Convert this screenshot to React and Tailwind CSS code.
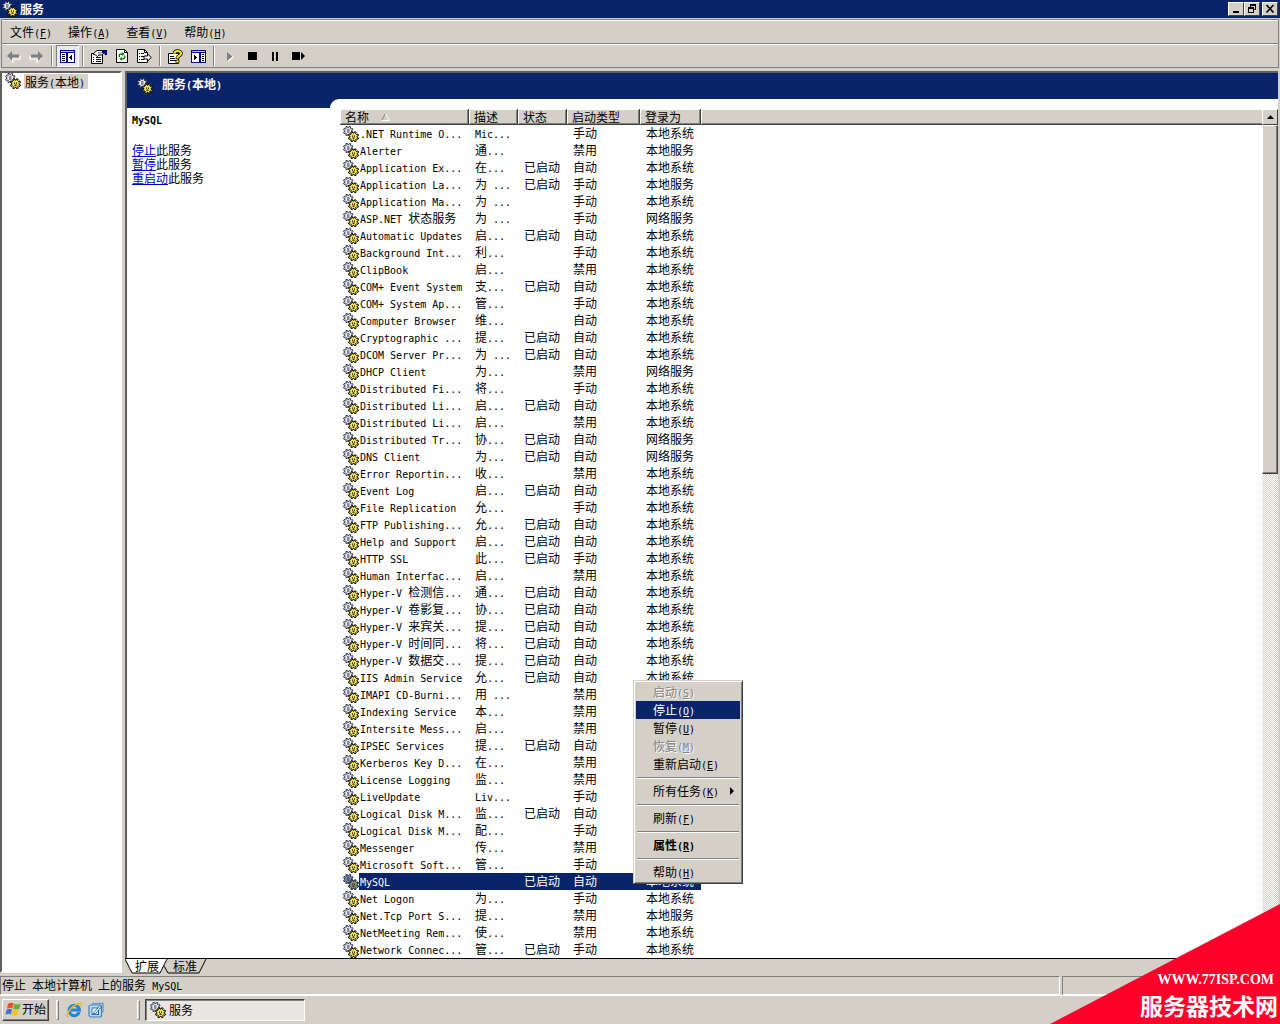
import React from "react";

const SYS = "本地系统";
const LOC = "本地服务";
const NET = "网络服务";

const services = [
  [".NET Runtime O...", "Mic...", 0, "手动", SYS],
  ["Alerter", "通...", 0, "禁用", LOC],
  ["Application Ex...", "在...", 1, "自动", SYS],
  ["Application La...", "为 ...", 1, "手动", LOC],
  ["Application Ma...", "为 ...", 0, "手动", SYS],
  ["ASP.NET 状态服务", "为 ...", 0, "手动", NET],
  ["Automatic Updates", "启...", 1, "自动", SYS],
  ["Background Int...", "利...", 0, "手动", SYS],
  ["ClipBook", "启...", 0, "禁用", SYS],
  ["COM+ Event System", "支...", 1, "自动", SYS],
  ["COM+ System Ap...", "管...", 0, "手动", SYS],
  ["Computer Browser", "维...", 0, "自动", SYS],
  ["Cryptographic ...", "提...", 1, "自动", SYS],
  ["DCOM Server Pr...", "为 ...", 1, "自动", SYS],
  ["DHCP Client", "为...", 0, "禁用", NET],
  ["Distributed Fi...", "将...", 0, "手动", SYS],
  ["Distributed Li...", "启...", 1, "自动", SYS],
  ["Distributed Li...", "启...", 0, "禁用", SYS],
  ["Distributed Tr...", "协...", 1, "自动", NET],
  ["DNS Client", "为...", 1, "自动", NET],
  ["Error Reportin...", "收...", 0, "禁用", SYS],
  ["Event Log", "启...", 1, "自动", SYS],
  ["File Replication", "允...", 0, "手动", SYS],
  ["FTP Publishing...", "允...", 1, "自动", SYS],
  ["Help and Support", "启...", 1, "自动", SYS],
  ["HTTP SSL", "此...", 1, "手动", SYS],
  ["Human Interfac...", "启...", 0, "禁用", SYS],
  ["Hyper-V 检测信...", "通...", 1, "自动", SYS],
  ["Hyper-V 卷影复...", "协...", 1, "自动", SYS],
  ["Hyper-V 来宾关...", "提...", 1, "自动", SYS],
  ["Hyper-V 时间同...", "将...", 1, "自动", SYS],
  ["Hyper-V 数据交...", "提...", 1, "自动", SYS],
  ["IIS Admin Service", "允...", 1, "自动", SYS],
  ["IMAPI CD-Burni...", "用 ...", 0, "禁用", SYS],
  ["Indexing Service", "本...", 0, "禁用", SYS],
  ["Intersite Mess...", "启...", 0, "禁用", SYS],
  ["IPSEC Services", "提...", 1, "自动", SYS],
  ["Kerberos Key D...", "在...", 0, "禁用", SYS],
  ["License Logging", "监...", 0, "禁用", SYS],
  ["LiveUpdate", "Liv...", 0, "手动", SYS],
  ["Logical Disk M...", "监...", 1, "自动", SYS],
  ["Logical Disk M...", "配...", 0, "手动", SYS],
  ["Messenger", "传...", 0, "禁用", SYS],
  ["Microsoft Soft...", "管...", 0, "手动", SYS],
  ["MySQL", "", 1, "自动", SYS],
  ["Net Logon", "为...", 0, "手动", SYS],
  ["Net.Tcp Port S...", "提...", 0, "禁用", LOC],
  ["NetMeeting Rem...", "使...", 0, "禁用", SYS],
  ["Network Connec...", "管...", 1, "手动", SYS],
];

/* Chinese at 12px with half-width Latin set at 10px monospace (6px advance). */
function T({ children }) {
  return (
    <>
      {children.split(/([\x20-\x7e]+)/).filter(Boolean).map((part, i) =>
        /^[\x20-\x7e]/.test(part) ? (
          <span key={i} className="text-[10px] leading-none font-['DejaVu_Sans_Mono',monospace] whitespace-pre">{part}</span>
        ) : (
          <span key={i}>{part}</span>
        )
      )}
    </>
  );
}

/* Label followed by its underlined access key, e.g. 文件(F) */
function Keyed({ label, k }) {
  return (
    <>
      {label}
      <span className="text-[10px] leading-none font-['DejaVu_Sans_Mono',monospace]">(<u>{k}</u>)</span>
    </>
  );
}

function gearPath(cx, cy, outer, inner, teeth) {
  const pts = [];
  const step = (Math.PI * 2) / teeth;
  for (let i = 0; i < teeth; i++) {
    const a = (i + 0.5) * step;
    [[-0.3, inner], [-0.2, outer], [0.2, outer], [0.3, inner]].forEach(([o, r]) => {
      pts.push((cx + Math.cos(a + o * step) * r).toFixed(2) + " " + (cy + Math.sin(a + o * step) * r).toFixed(2));
    });
  }
  return "M" + pts.join("L") + "Z";
}

const backGear = gearPath(5.3, 5, 4.9, 3.4, 8);
const frontGear = gearPath(10.5, 10.7, 5.2, 3.7, 8);

function Gears({ dim = false }) {
  const yellow = dim ? "#8f9150" : "#f4e650";
  const grey = dim ? "#7f8cb0" : "#eceef4";
  const ink = dim ? "#0a1a50" : "#000";
  return (
    <svg width="16" height="16" viewBox="0 0 16 16" className="shrink-0" aria-hidden="true">
      <path d={backGear} fill={grey} stroke="#20263c" strokeWidth="0.9" />
      <path d="M4 4h2.500M4 6h2.500" stroke="#20263c" strokeWidth="1" />
      <path d={frontGear} fill={yellow} stroke={ink} strokeWidth="1" />
      <path d="M9 10.200h1M11 10.200h1M9.500 12.200h2" stroke={ink} strokeWidth="1.200" />
    </svg>
  );
}

function Arrow({ flip = false }) {
  return (
    <svg width="15" height="14" viewBox="0 0 15 14" aria-hidden="true" className={flip ? "-scale-x-100" : ""}>
      <path d="M2 8l5 5V10h7V7" fill="none" stroke="#fff" strokeWidth="1.2" />
      <path d="M1 7l5-5v3.5h7v3H6V12z" fill="#808080" />
    </svg>
  );
}

function ToolButton({ label, pressed = false, children }) {
  return (
    <button
      type="button"
      aria-label={label}
      className={
        pressed
          ? "flex h-[22px] w-[23px] items-center justify-center border border-t-[#808080] border-l-[#808080] border-r-white border-b-white bg-[#ebe9e6]"
          : "flex h-[22px] w-[23px] items-center justify-center"
      }
    >
      {children}
    </button>
  );
}

function Sep() {
  return (
    <div className="flex h-5 w-2 justify-center">
      <div className="h-full w-[2px] border-l border-r border-l-[#808080] border-r-white" />
    </div>
  );
}

function Toolbar() {
  return (
    <div className="flex h-[23px] items-center border-t border-t-white">
      <ToolButton label="后退"><Arrow /></ToolButton>
      <ToolButton label="前进"><Arrow flip /></ToolButton>
      <Sep />
      <ToolButton label="显示/隐藏控制台树" pressed>
        <svg width="15" height="13" viewBox="0 0 15 13" shapeRendering="crispEdges" aria-hidden="true">
          <path fill="#00008b" d="M0 0h15v13H0z" />
          <path fill="#fff" d="M1 3h5v9H1zM8 3h6v9H8z" />
          <path fill="#c8c8c8" d="M1 1h13v1H1z" />
          <path fill="#000" d="M2 4h3v1H2zM2 6h3v1H2zM2 8h3v1H2zM2 10h3v1H2zM12 4v7l-3-3.5z" />
        </svg>
      </ToolButton>
      <Sep />
      <ToolButton label="属性">
        <svg width="17" height="15" viewBox="0 0 17 15" aria-hidden="true">
          <path fill="#fff" stroke="#000" d="M1.500 4.500h11v10h-11z" />
          <path stroke="#000" d="M3 10.500h1M6 10.500h5M3 12.500h1M6 12.500h5M3 8.500h1M6 8.500h5" />
          <path fill="#fff" stroke="#000" d="M3 5l4-3.500h5l2 2-2 2.500H9L7.500 7.500 5.500 6z" />
          <path stroke="#555" d="M8 3.500h4M8 5h3" strokeWidth=".7" />
          <path fill="#00008b" d="M12 1h5v5h-2l-1-2h-2z" />
        </svg>
      </ToolButton>
      <ToolButton label="刷新">
        <svg width="12" height="14" viewBox="0 0 12 14" aria-hidden="true">
          <path fill="#fff" stroke="#000" d="M.5.5h8l3 3v10H.5z" />
          <path fill="none" stroke="#000" d="M8.500.5v3h3" />
          <path fill="none" stroke="#008000" strokeWidth="1.300" d="M3.300 8V6.500Q3.300 5 5.500 5H7M8.700 6.500V8Q8.700 9.800 6.500 9.800H5" />
          <path fill="#008000" d="M6 3l2.500 2L6 7zM6 7.800v4L3.500 9.800z" />
        </svg>
      </ToolButton>
      <ToolButton label="导出列表">
        <svg width="15" height="14" viewBox="0 0 15 14" aria-hidden="true">
          <path fill="#fff" stroke="#000" d="M.5.5h7l3 3v10H.5z" />
          <path fill="none" stroke="#000" d="M7.500.5v3h3M2 4.500h1M4 4.500h3M2 7.500h1M4 7.500h3M2 10.500h1M4 10.500h3" />
          <path fill="#fff" stroke="#000" d="M7 7h3.500V4.800L14.300 8.500l-3.800 3.700V10H7z" />
        </svg>
      </ToolButton>
      <Sep />
      <ToolButton label="帮助">
        <svg width="15" height="15" viewBox="0 0 15 15" aria-hidden="true">
          <path fill="#fff" stroke="#000" d="M.5 4.500h10v10H.5z" />
          <path stroke="#000" d="M2 7.500h4M2 9.500h5M2 11.500h6" />
          <path fill="none" stroke="#000" strokeWidth="3.600" d="M6.500 4.500Q6.500 2 9.500 2T13 4.300Q13 6 11 7T9.500 9v1" />
          <path fill="none" stroke="#f5e600" strokeWidth="2.200" d="M6.500 4.800Q6.500 2 9.500 2T13 4.300Q13 6 11 7T9.500 9v.6" />
          <circle cx="9.500" cy="12.500" r="1.700" fill="#f5e600" stroke="#000" strokeWidth=".8" />
        </svg>
      </ToolButton>
      <ToolButton label="显示/隐藏操作窗格">
        <svg width="15" height="13" viewBox="0 0 15 13" shapeRendering="crispEdges" aria-hidden="true">
          <path fill="#00008b" d="M0 0h15v13H0z" />
          <path fill="#fff" d="M1 3h7v9H1zM10 3h4v9h-4z" />
          <path fill="#c8c8c8" d="M1 1h13v1H1z" />
          <path fill="#000" d="M3 5v5l3-2.500zM11 4h2v1h-2zM11 6h2v1h-2zM11 8h2v1h-2zM11 10h2v1h-2z" />
        </svg>
      </ToolButton>
      <Sep />
      <ToolButton label="启动服务">
        <svg width="8" height="11" viewBox="0 0 8 11" aria-hidden="true">
          <path fill="#fff" d="M2 2l6 4-6 5z" />
          <path fill="#808080" d="M1 1l5.500 4.500L1 10z" />
        </svg>
      </ToolButton>
      <ToolButton label="停止服务">
        <svg width="9" height="8" aria-hidden="true"><path d="M0 0h9v8H0z" /></svg>
      </ToolButton>
      <ToolButton label="暂停服务">
        <svg width="7" height="9" aria-hidden="true"><path d="M0 0h2v9H0zM4 0h2v9H4z" /></svg>
      </ToolButton>
      <ToolButton label="重新启动服务">
        <svg width="13" height="8" aria-hidden="true"><path d="M0 0h8v8H0zM9 0l4 4-4 4z" /></svg>
      </ToolButton>
    </div>
  );
}

function CaptionButton({ label, children }) {
  return (
    <button
      type="button"
      aria-label={label}
      className="flex h-[14px] w-4 items-center justify-center border border-t-white border-l-white border-r-[#404040] border-b-[#404040] bg-[#d4d0c8]"
    >
      {children}
    </button>
  );
}

function TitleBar() {
  return (
    <header className="flex h-[18px] items-center bg-[#0a246a] pr-[2px] pl-[2px] text-white">
      <Gears />
      <h1 className="flex-1 pb-px pl-[2px] text-[12px] font-bold">服务</h1>
      <CaptionButton label="最小化">
        <svg width="10" height="10"><path d="M2 7h6v2H2z" /></svg>
      </CaptionButton>
      <CaptionButton label="还原">
        <svg width="10" height="10" shapeRendering="crispEdges">
          <path d="M3 0h6v6H7V5h1V2H4v1H3zM1 3h6v6H1zM2 5v3h4V5z" fillRule="evenodd" />
        </svg>
      </CaptionButton>
      <div className="w-[2px]" />
      <CaptionButton label="关闭">
        <svg width="10" height="10"><path d="M1.500 1l7 7.500M8.500 1l-7 7.500" stroke="#000" strokeWidth="1.600" /></svg>
      </CaptionButton>
    </header>
  );
}

const menus = [["文件", "F"], ["操作", "A"], ["查看", "V"], ["帮助", "H"]];

function Th({ children }) {
  return (
    <th className="h-4 border-r border-b border-r-[#404040] border-b-[#404040] bg-[#d4d0c8] p-0 pl-[5px] text-left font-normal whitespace-nowrap shadow-[inset_1px_1px_0_#fff,inset_-1px_-1px_0_#808080]">
      {children}
    </th>
  );
}

function ServiceRow({ row }) {
  const [name, desc, running, type, logon] = row;
  const selected = name === "MySQL";
  const cell = selected
    ? "h-[17px] bg-[#0a246a] p-0 pl-[6px] align-top whitespace-nowrap text-white"
    : "h-[17px] p-0 pl-[6px] align-top whitespace-nowrap";
  return (
    <tr className="leading-[15px]">
      <td className="h-[17px] p-0 pl-[3px]">
        <div className="flex h-[17px] items-center">
          <Gears dim={selected} />
          <span
            className={
              selected
                ? "h-[17px] flex-1 bg-[#0a246a] pl-px whitespace-nowrap text-white"
                : "h-[17px] flex-1 pl-px whitespace-nowrap"
            }
          >
            <T>{name}</T>
          </span>
        </div>
      </td>
      <td className={cell}><T>{desc}</T></td>
      <td className={cell}>{running ? "已启动" : ""}</td>
      <td className={cell}>{type}</td>
      <td className={cell}>{logon}</td>
      <td className="p-0" />
    </tr>
  );
}

function ServiceTable() {
  return (
    <table className="w-full flex-1 table-fixed border-separate border-spacing-0 self-start text-[12px] leading-[15px]">
      <colgroup>
        <col className="w-[129px]" />
        <col className="w-[49px]" />
        <col className="w-[49px]" />
        <col className="w-[73px]" />
        <col className="w-[61px]" />
        <col />
      </colgroup>
      <thead>
        <tr>
          <Th>
            <span className="flex items-center">
              名称
              <svg width="9" height="8" viewBox="0 0 9 8" className="ml-3" aria-hidden="true">
                <path d="M4.500.5L.5 7.500" stroke="#808080" />
                <path d="M4.500.5l4 7h-8" stroke="#fff" fill="none" />
              </svg>
            </span>
          </Th>
          <Th>描述</Th>
          <Th>状态</Th>
          <Th>启动类型</Th>
          <Th>登录为</Th>
          <th className="h-4 border-b border-b-[#404040] bg-[#d4d0c8] p-0 shadow-[inset_1px_1px_0_#fff,inset_0_-1px_0_#808080]" />
        </tr>
      </thead>
      <tbody>
        {services.map((row, i) => (
          <ServiceRow key={i} row={row} />
        ))}
      </tbody>
    </table>
  );
}

function ScrollBar() {
  return (
    <div className="flex w-4 shrink-0 flex-col bg-[repeating-conic-gradient(#fff_0_25%,#d4d0c8_0_50%)] bg-[length:2px_2px]">
      <button
        type="button"
        aria-label="向上滚动"
        className="flex h-4 items-center justify-center border border-t-white border-l-white border-r-[#404040] border-b-[#404040] bg-[#d4d0c8]"
      >
        <svg width="7" height="4"><path d="M3.500 0L7 4H0z" /></svg>
      </button>
      <div className="h-[349px] border border-t-white border-l-white border-r-[#404040] border-b-[#404040] bg-[#d4d0c8] shadow-[inset_-1px_-1px_0_#808080]" />
    </div>
  );
}

function Details() {
  const link = "text-[#0000cc] underline";
  return (
    <section className="mt-[9px] w-[203px] shrink-0 bg-white pt-[4px] pl-[5px] text-[12px] leading-[14px]">
      <h3 className="font-bold"><T>MySQL</T></h3>
      <ul className="pt-[17px]">
        <li><a href="#stop" className={link}>停止</a>此服务</li>
        <li><a href="#pause" className={link}>暂停</a>此服务</li>
        <li><a href="#restart" className={link}>重启动</a>此服务</li>
      </ul>
    </section>
  );
}

function ViewTabs() {
  return (
    <div className="relative flex h-[18px] border-t border-t-black text-[12px] leading-[14px]">
      <svg width="84" height="16" viewBox="0 0 84 16" className="absolute top-0 left-0" aria-hidden="true">
        <path d="M0 0h42l-7 14H7z" fill="#fff" />
        <path d="M0 0l7 14h28l7-14M39 7l4 7h31l7-14" fill="none" stroke="#000" />
      </svg>
      <button type="button" className="relative ml-[10px] flex w-[38px] items-start">扩展</button>
      <button type="button" className="relative flex w-[34px] items-start">标准</button>
    </div>
  );
}

const contextItems = [
  { label: "启动", k: "S", disabled: true },
  { label: "停止", k: "O", active: true },
  { label: "暂停", k: "U" },
  { label: "恢复", k: "M", disabled: true },
  { label: "重新启动", k: "E" },
  null,
  { label: "所有任务", k: "K", sub: true },
  null,
  { label: "刷新", k: "F" },
  null,
  { label: "属性", k: "R", bold: true },
  null,
  { label: "帮助", k: "H" },
];

function itemClass(item) {
  const base = "flex h-[18px] w-full items-center pr-[6px] pb-px pl-[17px] text-left";
  if (item.disabled) return base + " text-[#808080] [text-shadow:1px_1px_0_#fff]";
  if (item.active) return base + " bg-[#0a246a] text-white";
  if (item.bold) return base + " font-bold";
  return base;
}

function ContextMenu() {
  return (
    <div
      role="menu"
      className="absolute top-[680px] left-[633px] w-[110px] border border-t-[#d4d0c8] border-l-[#d4d0c8] border-r-[#404040] border-b-[#404040] bg-[#d4d0c8] p-[2px] text-[12px] leading-[16px] shadow-[inset_1px_1px_0_#fff,inset_-1px_-1px_0_#808080]"
    >
      {contextItems.map((item, i) =>
        item ? (
          <button key={i} type="button" role="menuitem" disabled={item.disabled} className={itemClass(item)}>
            <span className="flex-1 whitespace-nowrap"><Keyed label={item.label} k={item.k} /></span>
            {item.sub && (
              <svg width="4" height="8" aria-hidden="true"><path d="M0 0l4 4-4 4z" /></svg>
            )}
          </button>
        ) : (
          <div key={i} role="separator" className="flex h-[9px] items-center px-px">
            <div className="h-[2px] w-full border-t border-b border-t-[#808080] border-b-white" />
          </div>
        )
      )}
    </div>
  );
}

function Taskbar() {
  return (
    <footer className="flex h-[29px] items-center border-t border-t-white pb-px pl-[2px] text-[12px]">
      <button
        type="button"
        className="flex h-[22px] w-[47px] items-center border border-t-white border-l-white border-r-[#404040] border-b-[#404040] pb-px pl-px shadow-[inset_-1px_-1px_0_#808080]"
      >
        <svg width="18" height="16" viewBox="0 0 17 16" className="shrink-0" aria-hidden="true">
          <path fill="#e8502a" d="M3.500 3Q6.500.8 9.200 2.400L7.800 7.500Q5.500 6 2.500 7.800z" />
          <path fill="#5fb336" d="M10 2.700Q12.500 4.300 16.300 2.400L14.800 7.800Q11.500 9.300 8.600 7.800z" />
          <path fill="#3f6fd8" d="M2.200 8.700Q5 7 7.600 8.400L6.200 13.400Q4 12.100.8 13.800z" />
          <path fill="#f6c21c" d="M8.400 8.700Q11.200 10.300 14.500 8.800L13 14Q10 15.600 7 13.900z" />
        </svg>
        <span className="whitespace-nowrap">开始</span>
      </button>
      <div className="ml-[7px] h-5 w-[3px] border border-t-white border-l-white border-r-[#808080] border-b-[#808080]" />
      <button type="button" aria-label="Internet Explorer" className="ml-[7px]">
        <svg width="17" height="16" viewBox="0 0 17 16" aria-hidden="true">
          <path d="M13.300 10A5.200 5.200 0 1 1 13.500 8H5" fill="none" stroke="#1f86dc" strokeWidth="3" />
          <path d="M2.500 14.800Q-.5 14.500 3 9T13 1.500Q17-.5 15 4" fill="none" stroke="#e9b62c" strokeWidth="1.400" />
        </svg>
      </button>
      <button type="button" aria-label="显示桌面" className="ml-[5px]">
        <svg width="16" height="16" viewBox="0 0 16 16" aria-hidden="true">
          <rect x="1" y="3" width="12.500" height="12" rx="2" fill="#b9dcf5" stroke="#3c7fc0" strokeWidth="1.200" />
          <path d="M4 1.500h11v9" fill="none" stroke="#5f9fd6" strokeWidth="1.400" />
          <rect x="4" y="6" width="6.500" height="6.500" fill="#fff" stroke="#2f6fb4" />
          <path d="M6 10.500l6-7 1.500 1.200-6 6.800-2 .5z" fill="#fff" stroke="#23598f" strokeWidth=".9" />
        </svg>
      </button>
      <div className="ml-[33px] h-5 w-[3px] border border-t-white border-l-white border-r-[#808080] border-b-[#808080]" />
      <button
        type="button"
        className="ml-[5px] flex h-[22px] w-[160px] items-center border border-t-[#404040] border-l-[#404040] border-r-white border-b-white bg-[#e9e7e3] pl-[4px] shadow-[inset_1px_1px_0_#808080]"
      >
        <Gears />
        <span className="pl-[3px]">服务</span>
      </button>
    </footer>
  );
}

function Banner() {
  return (
    <aside className="absolute right-0 bottom-0 flex h-[120px] w-[230px] flex-col items-end justify-end bg-[#ff002a] pb-px text-white [clip-path:polygon(100%_0,100%_100%,0_100%)]">
      <p className="pr-[6px] font-['Liberation_Serif',serif] text-[14px] leading-[14px] font-bold">WWW.77ISP.COM</p>
      <p className="pr-[2px] text-[23px] leading-[36px] font-bold">服务器技术网</p>
    </aside>
  );
}

export default function App() {
  return (
    <div className="relative flex min-h-screen flex-col overflow-hidden bg-[#d4d0c8] font-['Noto_Sans_CJK_SC',sans-serif] text-[12px] leading-[16px] text-black">
      <TitleBar />
      <div className="mt-px mr-px ml-px border border-[#808080]">
        <nav className="flex h-[24px] items-center gap-4 border-t border-b border-t-white border-b-[#808080] pb-px pl-[8px]">
          {menus.map(([label, k]) => (
            <button key={k} type="button" className="whitespace-nowrap"><Keyed label={label} k={k} /></button>
          ))}
        </nav>
        <Toolbar />
      </div>

      <main className="flex flex-1 pt-[3px]">
        <nav className="mb-[3px] w-[122px] shrink-0 border-2 border-t-[#606060] border-l-[#606060] border-r-white border-b-white bg-white">
          <a href="#services" className="flex items-center pl-[3px]">
            <Gears />
            <span className="ml-[3px] bg-[#d4d0c8] px-px pr-[3px] leading-[15px]"><T>服务(本地)</T></span>
          </a>
        </nav>

        <div className="ml-[3px] flex min-w-0 flex-1 flex-col">
          <div className="mr-[2px] flex flex-1 flex-col border-t-2 border-l-2 border-t-[#606060] border-l-[#606060] bg-[#0a246a]">
            <div className="flex h-[26px] items-center pl-[10px] text-white">
              <Gears />
              <h2 className="pb-1 pl-[9px] font-bold"><T>服务(本地)</T></h2>
            </div>
            <div className="flex flex-1">
              <Details />
              <div className="flex min-w-0 flex-1 rounded-tl-[9px] bg-white pt-[10px] pl-[10px]">
                <ServiceTable />
                <ScrollBar />
              </div>
            </div>
          </div>
          <ViewTabs />
        </div>
      </main>

      <div className="flex h-[19px] gap-[2px] leading-[16px]">
        <p className="w-[1060px] border border-t-[#808080] border-l-[#808080] border-r-white border-b-white pl-px">
          <T>停止 本地计算机 上的服务 MySQL</T>
        </p>
        <p className="flex-1 border border-t-[#808080] border-l-[#808080] border-r-white border-b-white" />
      </div>
      <Taskbar />
      <ContextMenu />
      <Banner />
    </div>
  );
}
